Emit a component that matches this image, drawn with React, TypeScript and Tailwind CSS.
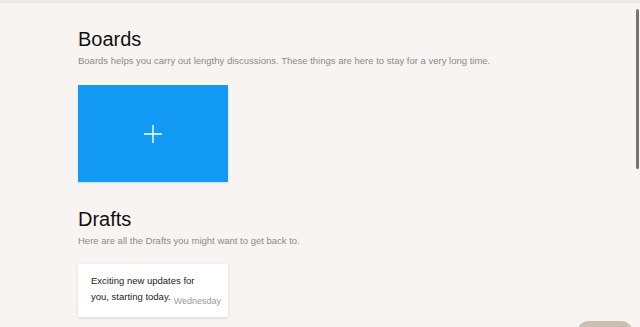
export default function App() {
  return (
    <div className="relative h-[327px] w-[640px] overflow-hidden bg-[#f8f4f1] font-['Liberation_Sans',Arial,sans-serif]">
      <div className="h-[3px] w-full border-b border-[#ece3de] bg-[#f4ebe7]" />
      <main className="pl-[78px] pt-[23px]">
        <section>
          <h1 className="text-[20px] leading-[26px] text-[#111]">Boards</h1>
          <p className="mt-[2px] text-[9.5px] leading-[14px] text-[#8b8b8b]">
            Boards helps you carry out lengthy discussions. These things are here to stay for a very long time.
          </p>
          <button className="mt-[17px] flex h-[97px] w-[150px] items-center justify-center bg-[#139af4] shadow-[0_1px_2px_rgba(0,0,0,0.12)]">
            <svg width="20" height="20" viewBox="0 0 20 20" stroke="white" strokeWidth="1.4">
              <path d="M10 1v18M1 10h18" />
            </svg>
          </button>
        </section>

        <section className="mt-[24px]">
          <h2 className="text-[20px] leading-[26px] text-[#111]">Drafts</h2>
          <p className="mt-[2px] text-[9.5px] leading-[14px] text-[#8b8b8b]">
            Here are all the Drafts you might want to get back to.
          </p>
          <div className="mt-[16px] h-[53px] w-[150px] bg-white pl-[13px] pr-[7px] pt-[9px] shadow-[0_1px_3px_rgba(0,0,0,0.12)]">
            <p className="text-[9.5px] leading-[16px] text-[#222]">Exciting new updates for</p>
            <div className="flex items-end justify-between">
              <p className="text-[9.5px] leading-[16px] text-[#222]">you, starting today.</p>
              <span className="mb-[-3px] text-[9px] leading-[14px] text-[#9a9a9a]">Wednesday</span>
            </div>
          </div>
        </section>
      </main>

      <div className="absolute right-[1px] top-[9px] h-[160px] w-[3px] rounded-sm bg-[#787572]" />
      <div className="absolute bottom-[-10px] left-[578px] h-[16px] w-[54px] rounded-t-[10px] bg-[#c9c0b2]" />
    </div>
  );
}
